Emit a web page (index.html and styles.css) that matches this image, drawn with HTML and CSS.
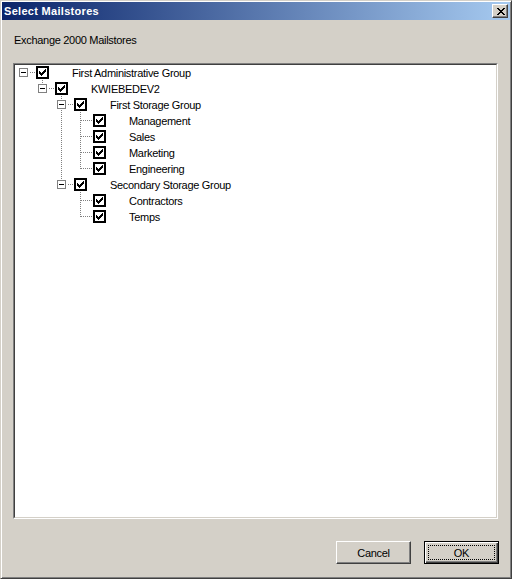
FILE: index.html
```html
<!DOCTYPE html>
<html lang="en">
<head>
<meta charset="UTF-8" />
<title>Select Mailstores</title>
<link rel="stylesheet" href="styles.css">
</head>
<body>
  <div class="window">
    <div class="titlebar">
      <span class="title">Select Mailstores</span>
      <span class="close-btn">
        <svg width="8" height="7" viewBox="0 0 8 7"><path d="M0 0h2v1h-2z M6 0h2v1h-2z M1 1h2v1h-2z M5 1h2v1h-2z M2 2h4v1h-4z M3 3h2v1h-2z M2 4h4v1h-4z M1 5h2v1h-2z M5 5h2v1h-2z M0 6h2v1h-2z M6 6h2v1h-2z" fill="#000"/></svg>
      </span>
    </div>

    <div class="content">
      <div class="caption">Exchange 2000 Mailstores</div>

      <div class="tree">
        <div class="tree-inner">
          <!-- dotted connector lines -->
          <svg class="tree-lines" width="481" height="452">
            <g stroke="#808080" stroke-width="1" stroke-dasharray="1 1" shape-rendering="crispEdges" fill="none">
              <path d="M15 7.5H21" />
              <path d="M34 23.5H40" />
              <path d="M53 39.5H59" />
              <path d="M53 119.5H59" />
              <path d="M27.5 15V19" />
              <path d="M46.5 31V35" />
              <path d="M46.5 45V115" />
              <path d="M65.5 47V104" />
              <path d="M66 55.5H78 M66 71.5H78 M66 87.5H78 M66 103.5H78" />
              <path d="M65.5 127V152" />
              <path d="M66 135.5H78 M66 151.5H78" />
            </g>
          </svg>

          <div class="row lvl-0"><span class="expander"></span><span class="check"></span><span class="label">First Administrative Group</span></div>
          <div class="row lvl-1"><span class="expander"></span><span class="check"></span><span class="label">KWIEBEDEV2</span></div>
          <div class="row lvl-2"><span class="expander"></span><span class="check"></span><span class="label">First Storage Group</span></div>
          <div class="row lvl-3"><span class="spacer"></span><span class="check"></span><span class="label">Management</span></div>
          <div class="row lvl-3"><span class="spacer"></span><span class="check"></span><span class="label">Sales</span></div>
          <div class="row lvl-3"><span class="spacer"></span><span class="check"></span><span class="label">Marketing</span></div>
          <div class="row lvl-3"><span class="spacer"></span><span class="check"></span><span class="label">Engineering</span></div>
          <div class="row lvl-2"><span class="expander"></span><span class="check"></span><span class="label">Secondary Storage Group</span></div>
          <div class="row lvl-3"><span class="spacer"></span><span class="check"></span><span class="label">Contractors</span></div>
          <div class="row lvl-3"><span class="spacer"></span><span class="check"></span><span class="label">Temps</span></div>
        </div>
      </div>

      <div class="buttons">
        <button class="btn">Cancel</button>
        <button class="btn default">OK</button>
      </div>
    </div>
  </div>
</body>
</html>
```

FILE: styles.css
```css
/* Classic Windows dialog */
* {
  box-sizing: border-box;
}
body {
  margin: 0;
  font-family: 'Liberation Sans', Arial, sans-serif;
  font-size: 11px;
  letter-spacing: -0.3px;
  color: #000;
}
.window {
  width: 512px;
  height: 579px;
  background: #d4d0c8;
  border: 1px solid;
  border-color: #d4d0c8 #404040 #404040 #d4d0c8;
  box-shadow: inset 1px 1px #fff, inset -1px -1px #808080;
  padding: 1px;
  display: flex;
  flex-direction: column;
}
.titlebar {
  height: 18px;
  flex: none;
  display: flex;
  align-items: center;
  justify-content: space-between;
  padding: 0 2px;
  background: linear-gradient(to right, #0a246a, #a6caf0);
}
.title {
  color: #fff;
  font-weight: 700;
  letter-spacing: 0.3px;
  line-height: 13px;
}
.close-btn {
  width: 16px;
  height: 14px;
  display: flex;
  align-items: center;
  justify-content: center;
  padding-left: 1px;
  background: #d4d0c8;
  border: 1px solid;
  border-color: #fff #404040 #404040 #fff;
  box-shadow: inset -1px -1px #808080;
}
.close-btn svg {
  display: block;
}
.content {
  flex: 1;
  display: flex;
  flex-direction: column;
}
.caption {
  margin: 14px 0 0 12px;
  line-height: 13px;
}
.tree {
  margin: 16px 0 0 11px;
  width: 485px;
  height: 456px;
  border: 1px solid;
  border-color: #808080 #fff #fff #808080;
}
.tree-inner {
  position: relative;
  height: 100%;
  background: #fff;
  border: 1px solid;
  border-color: #404040 #d4d0c8 #d4d0c8 #404040;
}
.tree-lines {
  position: absolute;
  left: 0;
  top: 0;
}
.row {
  height: 16px;
  padding-left: 4px;
  display: flex;
  align-items: flex-start;
  white-space: nowrap;
}
.lvl-1 { padding-left: 23px; }
.lvl-2 { padding-left: 42px; }
.lvl-3 { padding-left: 61px; }
.expander,
.spacer {
  width: 9px;
  height: 9px;
  margin-top: 3px;
  flex: none;
}
.expander {
  position: relative;
  border: 1px solid #808080;
  background: #fff;
}
.expander::after {
  content: "";
  position: absolute;
  left: 1px;
  top: 3px;
  width: 5px;
  height: 1px;
  background: #000;
}
.check {
  width: 13px;
  height: 13px;
  flex: none;
  margin: 1px 0 0 8px;
  border: 2px solid #000;
  background: #fff;
  /* tick drawn as a small svg */
  background-image: url("data:image/svg+xml,%3Csvg xmlns='http://www.w3.org/2000/svg' width='9' height='9'%3E%3Cpath d='M1 3h1v3h-1z M2 4h1v3h-1z M3 5h1v3h-1z M4 4h1v3h-1z M5 3h1v3h-1z M6 2h1v3h-1z M7 1h1v3h-1z' fill='%23000'/%3E%3C/svg%3E");
  background-repeat: no-repeat;
}
.label {
  margin: 2px 0 0 23px;
  line-height: 13px;
}
.buttons {
  margin-top: 22px;
  padding-right: 11px;
  display: flex;
  justify-content: flex-end;
  gap: 13px;
}
.btn {
  position: relative;
  width: 75px;
  height: 23px;
  padding: 0;
  font: inherit;
  letter-spacing: inherit;
  color: #000;
  background: #d4d0c8;
  border: 1px solid;
  border-color: #fff #404040 #404040 #fff;
  box-shadow: inset -1px -1px #808080;
  border-radius: 0;
}
.btn.default {
  border: 1px solid #000;
  box-shadow: inset 1px 1px #fff, inset -1px -1px #404040, inset -2px -2px #808080;
}
.btn.default::after {
  content: "";
  position: absolute;
  left: 3px;
  top: 3px;
  right: 3px;
  bottom: 3px;
  border: 1px dotted #000;
}
```
